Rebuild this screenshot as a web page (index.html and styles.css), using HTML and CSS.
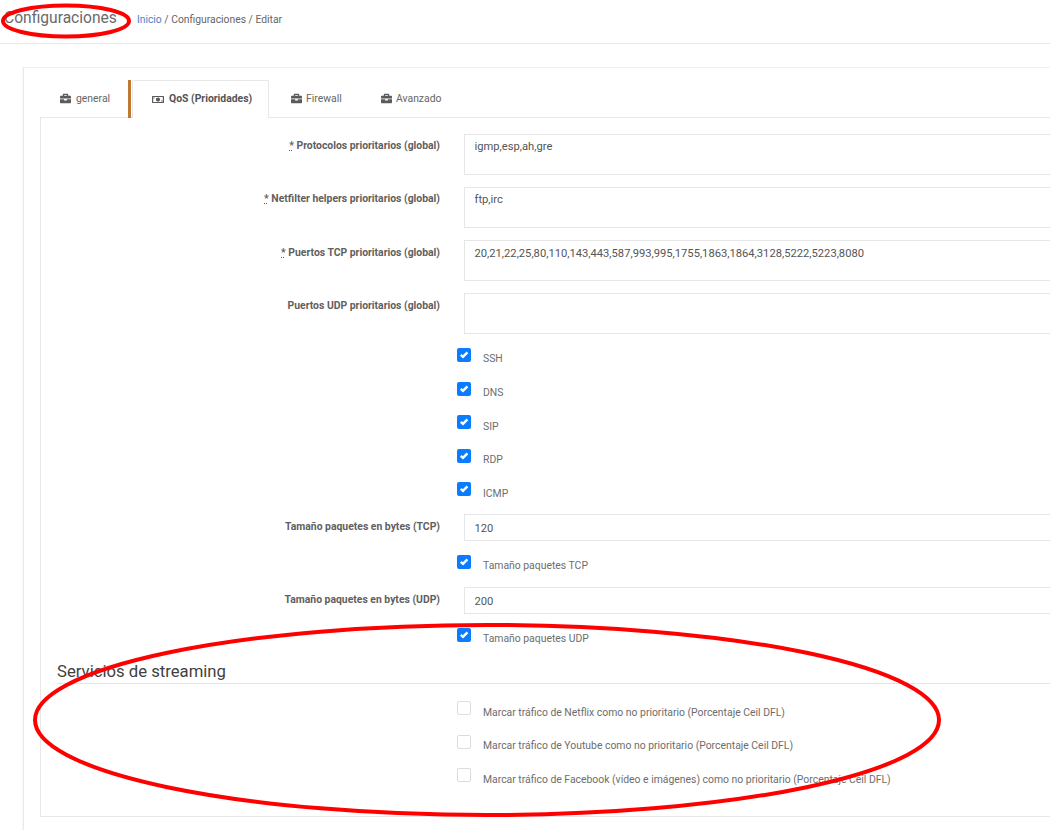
FILE: index.html
```html
<!DOCTYPE html>
<html lang="es">
<head>
<meta charset="utf-8">
<title>Configuraciones</title>
<link rel="stylesheet" href="styles.css">
</head>
<body>
<svg class="defs" width="0" height="0" aria-hidden="true">
  <symbol id="briefcase" viewBox="0 0 512 512"><path d="M320 336c0 8.84-7.16 16-16 16h-96c-8.84 0-16-7.16-16-16v-48H0v144c0 25.6 22.4 48 48 48h416c25.6 0 48-22.4 48-48V288H320v48zm144-208h-80V80c0-25.6-22.4-48-48-48H176c-25.6 0-48 22.4-48 48v48H48c-25.6 0-48 22.4-48 48v80h512v-80c0-25.6-22.4-48-48-48zm-144 0H192V96h128v32z"/></symbol>
  <symbol id="money" viewBox="0 0 640 512"><path fill-rule="evenodd" d="M32 64h576c18 0 32 14 32 32v320c0 18-14 32-32 32H32c-18 0-32-14-32-32V96c0-18 14-32 32-32zm32 64v256h512V128H64zm256 16c62 0 112 50 112 112s-50 112-112 112-112-50-112-112 50-112 112-112zM88 152h64c0 35-29 64-64 64v-64zm464 208h-64c0-35 29-64 64-64v64z"/></symbol>
  <symbol id="tick" viewBox="0 0 14 14"><path d="M3.8 6.8 6 8.8 10.4 4.4" fill="none" stroke="#fff" stroke-width="2.5"/></symbol>
</svg>

<div class="page">
  <header class="topbar">
    <h1 class="title">Configuraciones</h1>
    <nav class="crumbs"><a class="crumb-link">Inicio</a> / Configuraciones / Editar</nav>
  </header>

  <main class="card">
    <ul class="tabs">
      <li class="tab tab-first"><svg class="tab-icon"><use href="#briefcase"/></svg>general</li>
      <li class="tab tab-active"><svg class="tab-icon tab-icon-wide"><use href="#money"/></svg>QoS (Prioridades)</li>
      <li class="tab tab-third"><svg class="tab-icon"><use href="#briefcase"/></svg>Firewall</li>
      <li class="tab tab-fourth"><svg class="tab-icon"><use href="#briefcase"/></svg>Avanzado</li>
    </ul>

    <form class="pane">
      <div class="row">
        <label class="field-label"><span class="req">*</span> Protocolos prioritarios (global)</label>
        <textarea class="box box-area">igmp,esp,ah,gre</textarea>
      </div>
      <div class="row">
        <label class="field-label"><span class="req">*</span> Netfilter helpers prioritarios (global)</label>
        <textarea class="box box-area">ftp,irc</textarea>
      </div>
      <div class="row">
        <label class="field-label field-label-low"><span class="req">*</span> Puertos TCP prioritarios (global)</label>
        <textarea class="box box-area box-area-low">20,21,22,25,80,110,143,443,587,993,995,1755,1863,1864,3128,5222,5223,8080</textarea>
      </div>
      <div class="row">
        <label class="field-label field-label-low">Puertos UDP prioritarios (global)</label>
        <textarea class="box box-area"></textarea>
      </div>

      <div class="row-check"><span class="check on"><svg><use href="#tick"/></svg></span><span class="check-text">SSH</span></div>
      <div class="row-check"><span class="check on"><svg><use href="#tick"/></svg></span><span class="check-text">DNS</span></div>
      <div class="row-check"><span class="check on"><svg><use href="#tick"/></svg></span><span class="check-text">SIP</span></div>
      <div class="row-check"><span class="check on"><svg><use href="#tick"/></svg></span><span class="check-text">RDP</span></div>
      <div class="row-check"><span class="check on"><svg><use href="#tick"/></svg></span><span class="check-text">ICMP</span></div>

      <div class="row">
        <label class="field-label field-label-low">Tamaño paquetes en bytes (TCP)</label>
        <input class="box box-input" type="text" value="120">
      </div>
      <div class="row-check"><span class="check on"><svg><use href="#tick"/></svg></span><span class="check-text">Tamaño paquetes TCP</span></div>
      <div class="row">
        <label class="field-label field-label-low">Tamaño paquetes en bytes (UDP)</label>
        <input class="box box-input" type="text" value="200">
      </div>
      <div class="row-check"><span class="check on"><svg><use href="#tick"/></svg></span><span class="check-text">Tamaño paquetes UDP</span></div>

      <h2 class="section-title">Servicios de streaming</h2>

      <div class="row-check"><span class="check"></span><span class="check-text">Marcar tráfico de Netflix como no prioritario (Porcentaje Ceil DFL)</span></div>
      <div class="row-check"><span class="check"></span><span class="check-text">Marcar tráfico de Youtube como no prioritario (Porcentaje Ceil DFL)</span></div>
      <div class="row-check"><span class="check"></span><span class="check-text">Marcar tráfico de Facebook (vídeo e imágenes) como no prioritario (Porcentaje Ceil DFL)</span></div>
    </form>
  </main>
</div>

<svg class="annotations" viewBox="0 0 1050 830" aria-hidden="true">
  <ellipse cx="66" cy="21" rx="63" ry="15.5"/>
  <ellipse cx="487" cy="720" rx="452" ry="95"/>
</svg>
</body>
</html>
```

FILE: styles.css
```css
* { box-sizing: border-box; }

html, body {
  margin: 0;
  height: 830px;
  overflow: hidden;
  background: #fff;
}

body {
  position: relative;
  font-family: Roboto, "Liberation Sans", sans-serif;
  color: #555;
}

.defs { position: absolute; }

.page { width: 1120px; }

.topbar {
  display: flex;
  align-items: flex-start;
  height: 44px;
  padding: 9px 0 0 4px;
  border-bottom: 1px solid #e8e8e8;
}

.title {
  margin: 0;
  font-size: 15.6px;
  line-height: 18px;
  font-weight: 400;
  color: #6a6a6a;
}

.crumbs {
  margin: 3px 0 0 20px;
  font-size: 10.35px;
  line-height: 15px;
  color: #666;
}

.crumb-link { color: #4d82c4; }

.card {
  margin: 23px 0 0 23px;
  padding: 12px 0 0 16px;
  height: 800px;
  border-top: 1px solid #f0f0f0;
  border-left: 1px solid #e9e9e9;
  box-shadow: -1px 0 2px rgba(0, 0, 0, 0.03);
}

.tabs {
  display: flex;
  margin: 0;
  padding: 0;
  list-style: none;
  height: 37px;
}

.tab {
  display: flex;
  align-items: center;
  gap: 5px;
  font-size: 10.4px;
  line-height: 14px;
  color: #666;
}

.tab-icon {
  flex: none;
  width: 11px;
  height: 11px;
  fill: #5b5b5b;
}

.tab-icon-wide { width: 12px; }

.tab-first { width: 88px; padding-left: 20px; }

.tab-active {
  position: relative;
  z-index: 1;
  width: 141px;
  height: 38px;
  padding-left: 21px;
  border-left: 3px solid #bc7a35;
  font-weight: 700;
  color: #555;
}

.tab-active::before {
  content: "";
  position: absolute;
  inset: 0 0 0 1px;
  border: 1px solid #e8e8e8;
  border-bottom: 0;
  border-radius: 2px 2px 0 0;
  background: #fff;
  z-index: -1;
}

.tab-third { width: 90px; padding-left: 22px; gap: 4px; }
.tab-fourth { padding-left: 22px; gap: 4px; }

.pane {
  height: 700px;
  padding: 16px 0 17px;
  border: 1px solid #e8e8e8;
}

.row {
  display: grid;
  grid-template-columns: 399px 640px;
  column-gap: 24px;
  margin-bottom: 12px;
}

.field-label {
  padding-top: 5px;
  text-align: right;
  font-size: 10.4px;
  line-height: 14px;
  font-weight: 700;
  color: #5f5f5f;
}

.field-label-low { padding-top: 6px; }

.req {
  text-decoration: underline dotted;
}

.box {
  display: block;
  width: 100%;
  margin: 0;
  padding: 5px 9.5px;
  border: 1px solid #e6e6e6;
  border-radius: 0;
  outline: 0;
  background: #fff;
  font-family: Roboto, "Liberation Sans", sans-serif;
  font-size: 11.2px;
  line-height: 14px;
  color: #555;
}

.box-area { height: 41px; resize: none; overflow: hidden; }
.box-area-low { padding-top: 6px; }
.box-input { height: 27px; padding: 6px 9.5px 4px; }

.row-check {
  display: flex;
  align-items: flex-start;
  height: 33.6px;
  padding: 2px 0 0 416px;
}

.check {
  flex: none;
  width: 14px;
  height: 14px;
  border: 1px solid #dcdcdc;
  border-radius: 2px;
  background: #fff;
}

.check.on {
  border: 0;
  background: #0a7cff;
}

.check svg {
  display: block;
  width: 14px;
  height: 14px;
}

.check-text {
  margin: 4.4px 0 0 12px;
  font-size: 10.4px;
  line-height: 14px;
  color: #6d6d6d;
  white-space: nowrap;
}

.section-title {
  margin: 0 0 15px 16px;
  height: 25px;
  border-bottom: 1px solid #e4e4e4;
  font-size: 16.7px;
  line-height: 26px;
  font-weight: 400;
  color: #3f3f3f;
}

.annotations {
  position: absolute;
  inset: 0;
  width: 1050px;
  height: 830px;
  pointer-events: none;
}

.annotations ellipse {
  fill: none;
  stroke: #f00;
  stroke-width: 4;
}
```
